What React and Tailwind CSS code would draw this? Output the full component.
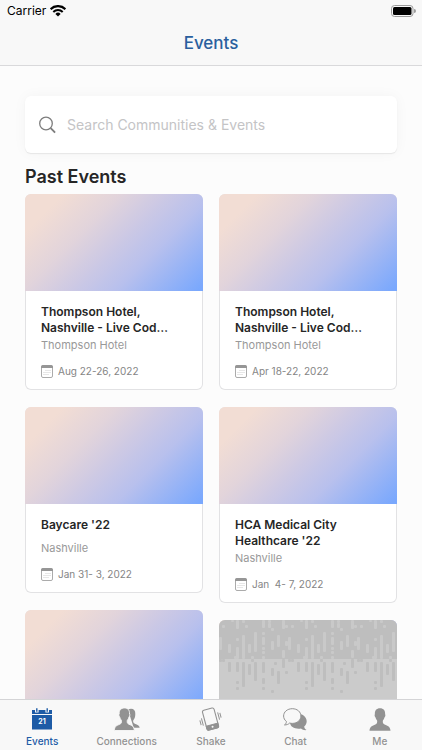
const leftEvents = [
  { title: "Thompson Hotel, Nashville - Live Cod…", place: "Thompson Hotel", date: "Aug 22-26, 2022" },
  { title: "Baycare '22", place: "Nashville", date: "Jan 31- 3, 2022" },
  { cover: "gradient" },
];

const rightEvents = [
  { title: "Thompson Hotel, Nashville - Live Cod…", place: "Thompson Hotel", date: "Apr 18-22, 2022" },
  { title: "HCA Medical City Healthcare '22", place: "Nashville", date: "Jan  4- 7, 2022" },
  { cover: "rain" },
];

// [x, y, height] of each streak inside one 69px wide tile
const lightStreaks = [
  [0, 17, 13], [3, 5, 3], [9, 24, 9], [17, 0, 9], [17, 18, 3], [17, 27, 12],
  [23, 0, 3], [23, 15, 24], [26, 5, 3], [29, 24, 9], [35, 12, 20], [43, 0, 8],
  [43, 12, 3], [43, 17, 8], [43, 27, 3], [43, 31, 3], [43, 36, 3], [49, 3, 5],
  [52, 8, 3], [52, 21, 9], [58, 15, 12], [63, 0, 9], [63, 30, 8], [66, 5, 3],
  [66, 21, 5], [49, 0, 3], [12, 0, 2], [32, 36, 3], [15, 36, 3],
];

const darkStreaks = [
  [3, 39, 3], [9, 42, 10], [17, 42, 10], [17, 61, 3], [17, 67, 3], [23, 42, 25],
  [29, 44, 11], [32, 39, 3], [35, 42, 19], [43, 42, 11], [43, 58, 6], [43, 67, 3],
  [52, 48, 8], [52, 70, 3], [55, 42, 3], [58, 51, 13], [63, 39, 9], [66, 51, 3],
  [0, 39, 3],
];

function WifiIcon() {
  return (
    <svg viewBox="0 0 16 12" className="w-4 h-3" aria-hidden="true">
      <path d="M.6 4.100A10.600 10.600 0 0 1 15.400 4.100" fill="none" stroke="#000" strokeWidth="2.200" />
      <path d="M3.300 7A6.700 6.700 0 0 1 12.700 7" fill="none" stroke="#000" strokeWidth="2" />
      <path d="M8 11.500 5.400 8.900a3.700 3.700 0 0 1 5.200 0Z" />
    </svg>
  );
}

function BatteryIcon() {
  return (
    <svg viewBox="0 0 25 12" className="w-[25px] h-3" aria-hidden="true">
      <rect x=".5" y=".5" width="21.500" height="11" rx="3" fill="none" stroke="#9b9b9b" />
      <rect x="2" y="2" width="18.500" height="8" rx="1.500" />
      <path d="M23 4a2 2 0 0 1 0 4Z" fill="#9b9b9b" />
    </svg>
  );
}

function SearchIcon() {
  return (
    <svg viewBox="0 0 18 18" className="w-[18px] h-[18px] shrink-0" fill="none" stroke="#7d7d7d" aria-hidden="true">
      <circle cx="7" cy="7.500" r="6.300" strokeWidth="1.300" />
      <path d="m11.700 12.200 4.400 4.400" strokeWidth="1.900" />
    </svg>
  );
}

function DateIcon() {
  return (
    <svg viewBox="0 0 12 13" className="w-3 h-[13px] shrink-0" fill="none" aria-hidden="true">
      <rect x=".5" y=".5" width="11" height="12" rx="1.500" stroke="#ababab" />
      <path d="M0 3V2a2 2 0 0 1 2-2h8a2 2 0 0 1 2 2v1Z" fill="#969696" />
      <path d="M4.500 5.500h5.500M2.500 7.500h7.500M2.500 9.500h5.500" stroke="#cfcfcf" strokeDasharray="1 1" />
    </svg>
  );
}

function EventsIcon() {
  return (
    <svg viewBox="0 0 20 22" className="w-5 h-[22px]" fill="#1d5ba6" aria-hidden="true">
      <path d="M0 2h3v2.500h3.600V2h6.800v2.500H17V2h3v4H0Z" />
      <path d="M4.100.3h1.400v3.500H4.100zM14.500.3h1.400v3.500h-1.400zM0 7h20v14.500H0z" />
      <text x="10" y="16" textAnchor="middle" fontSize="7" fontWeight="700" fill="#fff">21</text>
    </svg>
  );
}

function ConnectionsIcon() {
  return (
    <svg viewBox="0 0 26 23" className="w-[26px] h-[23px]" fill="#929292" aria-hidden="true">
      <path d="M14 1.800C15 1 16 .8 17 .8c3 0 4.500 2 4.300 5.200 0 3-.7 4.800-2 6.300-.4 1.600 0 2.700 1.500 3.400 2.700 1 4.500 1.700 4.900 4.100h-6z" />
      <path
        d="M10.500 0c3.500 0 5.300 2.300 5 6 .5.300.5 2-.5 3-.3 1.500-.9 2.500-1.700 3.300-.3 2.300 0 3.200 1.700 4 3.300 1.300 5 2 5.300 6.200H.3c.3-4.200 2-4.900 5.400-6.200 1.700-.8 2-1.700 1.700-4C6.600 11.500 6 10.500 5.700 9c-1-1-1-2.700-.5-3-.3-3.700 1.700-6 5.300-6Z"
        stroke="#f8f8f8"
        strokeWidth=".9"
      />
    </svg>
  );
}

function ShakeIcon() {
  return (
    <svg viewBox="0 0 25 24" className="w-[25px] h-6" fill="none" stroke="#929292" aria-hidden="true">
      <g transform="rotate(-15 12.500 12)">
        <rect x="6.500" y="1.800" width="12" height="20.500" rx="1.800" strokeWidth="1.100" />
        <path d="M6.500 17.800h12v2.900q0 1.600-1.800 1.600H8.300q-1.800 0-1.800-1.600Z" fill="#929292" />
        <circle cx="12.500" cy="20" r="1" fill="#f8f8f8" stroke="none" />
        <path d="M3.900 9v7.500M1.900 10.500v5M21.100 7.500V15M23.100 8.500v5" />
      </g>
    </svg>
  );
}

function ChatIcon() {
  return (
    <svg viewBox="0 0 24 23" className="w-6 h-[23px]" aria-hidden="true">
      <path d="M14 5.500c5.500 0 9.700 3.600 9.700 7.800 0 2.300-1 4-2.500 5.300.1 1.500.8 2.600 2.300 3.500-2.200.3-4-.3-5.500-1.600-5.500 1-11-1.500-11-6Z" fill="#929292" />
      <path
        d="M9.300.7c5 0 8.600 3.200 8.600 7.300s-3.600 7.400-8.600 7.400c-1 0-1.800-.1-2.600-.4-1.300 1.300-3 2-5.200 1.900 1.300-.9 1.900-2 1.900-3.500C1.600 12.100.6 10.200.6 8 .6 3.900 4.300.7 9.300.7Z"
        fill="#f8f8f8"
        stroke="#929292"
      />
    </svg>
  );
}

function MeIcon() {
  return (
    <svg viewBox="0 0 22 23" className="w-[22px] h-[23px]" fill="#929292" aria-hidden="true">
      <path d="M11 .3c3.500 0 5.400 2.200 5.100 6 .5.300.4 2-.5 3-.3 1.400-.9 2.400-1.700 3.200-.3 2 0 3.100 1.700 3.900 3.200 1.300 5.600 2 5.900 6.300H.5c.3-4.300 2.700-5 5.900-6.300 1.700-.8 2-1.900 1.700-3.900-.8-.8-1.400-1.800-1.700-3.200-.9-1-1-2.700-.5-3-.3-3.800 1.600-6 5.100-6Z" />
    </svg>
  );
}

function RainCover() {
  return (
    <svg className="block w-full h-full" aria-hidden="true">
      <defs>
        <pattern id="rain" width="69" height="97" patternUnits="userSpaceOnUse">
          <rect width="69" height="39" fill="#bebebe" />
          <rect y="39" width="69" height="58" fill="#cbcbcb" />
          {lightStreaks.map(([x, y, h], i) => (
            <rect key={i} x={x} y={y} width="3" height={h} rx="1" fill="#c9c9c9" />
          ))}
          {darkStreaks.map(([x, y, h], i) => (
            <rect key={i} x={x} y={y} width="3" height={h} rx="1" fill="#bebebe" />
          ))}
        </pattern>
      </defs>
      <rect width="100%" height="100%" fill="url(#rain)" />
    </svg>
  );
}

function EventCard({ event }) {
  return (
    <article className="rounded-md overflow-hidden bg-white shadow-[inset_0_0_0_1px_#e2e2e4]">
      <div className="h-[97px] bg-[linear-gradient(135deg,#f2ddd4_14%,#e2d4db_34%,#cdc9e4_51%,#b8c0ed_68%,#7aa8fd_98%)]">
        {event.cover === "rain" && <RainCover />}
      </div>
      {event.title && (
        <div className="px-4 pt-[13px] pb-2.5">
          <h3 className="min-h-[22px] text-xs leading-4 font-semibold text-[#262626]">{event.title}</h3>
          <p className="text-[11px] leading-[18px] text-[#999999]">{event.place}</p>
          <p className="mt-2 flex items-center gap-[5px] text-[10px] leading-[18px] text-[#858585] whitespace-pre">
            <DateIcon />
            {event.date}
          </p>
        </div>
      )}
    </article>
  );
}

const tabs = [
  { label: "Events", Icon: EventsIcon, active: true },
  { label: "Connections", Icon: ConnectionsIcon },
  { label: "Shake", Icon: ShakeIcon },
  { label: "Chat", Icon: ChatIcon },
  { label: "Me", Icon: MeIcon },
];

export default function App() {
  return (
    <div className="h-screen flex flex-col overflow-hidden bg-[#fcfcfc] font-['Inter',sans-serif]">
      <header className="shrink-0 bg-[#f8f8f8] border-b border-[#d9d9db]">
        <div className="h-[22px] pl-[7px] pr-1.5 flex items-center justify-between">
          <div className="flex items-center gap-1 text-xs text-black">
            Carrier
            <WifiIcon />
          </div>
          <BatteryIcon />
        </div>
        <h1 className="h-[43px] flex items-center justify-center text-[17px] font-medium text-[#2a5f9e]">Events</h1>
      </header>

      <main className="flex-1 min-h-0 overflow-hidden px-[25px] pt-[30px]">
        <label className="h-[57px] px-3.5 flex items-center gap-2.5 rounded-md bg-white shadow-[0_1px_1px_#e6e6e6,0_0_14px_rgba(0,0,0,0.04)]">
          <SearchIcon />
          <input
            type="search"
            aria-label="Search Communities & Events"
            placeholder="Search Communities & Events"
            className="flex-1 min-w-0 bg-transparent text-sm text-gray-800 placeholder:text-[#c4c4c6] outline-none"
          />
        </label>

        <h2 className="mt-3 mb-[5px] text-lg leading-6 font-semibold text-[#262626]">Past Events</h2>

        <div className="grid grid-cols-2 gap-4">
          <div className="space-y-[17px]">
            {leftEvents.map((event, i) => (
              <EventCard key={i} event={event} />
            ))}
          </div>
          <div className="space-y-[17px]">
            {rightEvents.map((event, i) => (
              <EventCard key={i} event={event} />
            ))}
          </div>
        </div>
      </main>

      <nav className="shrink-0 h-[51px] grid grid-cols-5 bg-[#f8f8f8] border-t border-[#d4d4d6]">
        {tabs.map(({ label, Icon, active }) => (
          <a
            key={label}
            href="#"
            className={`pt-[7px] flex flex-col items-center text-[10px] leading-3 font-medium ${
              active ? "text-[#1d5ba6]" : "text-[#929292]"
            }`}
          >
            <span className="h-6 mb-1 flex items-center">
              <Icon />
            </span>
            {label}
          </a>
        ))}
      </nav>
    </div>
  );
}
